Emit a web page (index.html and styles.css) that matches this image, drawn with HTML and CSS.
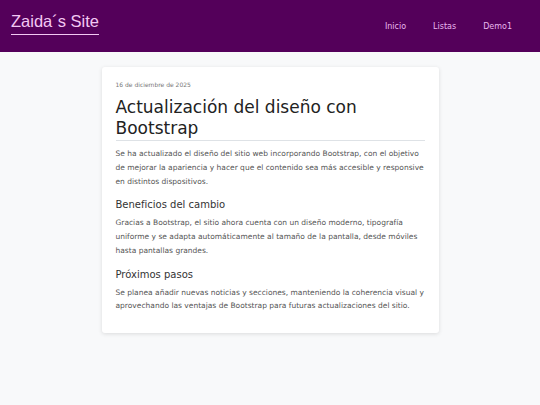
FILE: index.html
```html
<!DOCTYPE html>
<html lang="es">
<head>
    <meta charset="UTF-8">
    <meta name="viewport" content="width=device-width, initial-scale=1.0">
    <title>Zaida´s Site</title>
    <link rel="stylesheet" href="styles.css">
</head>
<body>

    <!-- Header -->
    <header class="site-header">
        <a href="#" class="brand">Zaida´s Site</a>
        <nav class="main-nav">
            <a href="#">Inicio</a>
            <a href="#">Listas</a>
            <a href="#">Demo1</a>
        </nav>
    </header>

    <!-- News article -->
    <main class="content">
        <article class="news-card">
            <p class="news-date">16 de diciembre de 2025</p>
            <h1>Actualización del diseño con Bootstrap</h1>
            <p>Se ha actualizado el diseño del sitio web incorporando Bootstrap, con el objetivo de mejorar la apariencia y hacer que el contenido sea más accesible y responsive en distintos dispositivos.</p>

            <h2>Beneficios del cambio</h2>
            <p>Gracias a Bootstrap, el sitio ahora cuenta con un diseño moderno, tipografía uniforme y se adapta automáticamente al tamaño de la pantalla, desde móviles hasta pantallas grandes.</p>

            <h2>Próximos pasos</h2>
            <p>Se planea añadir nuevas noticias y secciones, manteniendo la coherencia visual y aprovechando las ventajas de Bootstrap para futuras actualizaciones del sitio.</p>
        </article>
    </main>

</body>
</html>
```

FILE: styles.css
```css
/* General */
body {
    margin: 0;
    font-family: "DejaVu Sans", Verdana, sans-serif;
    background-color: #f8f9fa;
    color: #212529;
}

/* Header */
.site-header {
    display: flex;
    justify-content: space-between;
    align-items: center;
    height: 52px;
    padding: 0 28px 0 11px;
    background-color: #54005a;
}

.brand {
    font-family: "Liberation Sans", Arial, sans-serif;
    font-size: 16.5px;
    color: #f3c8f3;
    text-decoration: none;
    border-bottom: 1px solid #f3c8f3;
    padding-bottom: 3px;
    margin-top: -6px;
}

.main-nav {
    display: flex;
    gap: 27px;
}

.main-nav a {
    font-size: 8px;
    color: #e8b8ee;
    text-decoration: none;
}

/* Content */
.content {
    display: flex;
    justify-content: center;
    padding: 15px 0;
}

.news-card {
    width: 309px;
    background: white;
    padding: 14px 14px 20px;
    border-radius: 3px;
    box-shadow: 0 1px 4px rgba(0, 0, 0, 0.12);
}

.news-card .news-date {
    margin: 0 0 8px;
    font-size: 6px;
    line-height: 8px;
    color: #777;
}

.news-card h1 {
    margin: 0 0 6px;
    padding-bottom: 1px;
    font-weight: normal;
    font-size: 17px;
    line-height: 21px;
    color: #222;
    border-bottom: 1px solid #dee2e6;
}

.news-card h2 {
    margin: 0 0 5px;
    font-weight: normal;
    font-size: 10px;
    line-height: 13px;
    color: #333;
}

.news-card p {
    margin: 0 0 10px;
    font-size: 7.5px;
    line-height: 13.75px;
    color: #555;
}

.news-card p:last-child {
    margin-bottom: 0;
}
```
